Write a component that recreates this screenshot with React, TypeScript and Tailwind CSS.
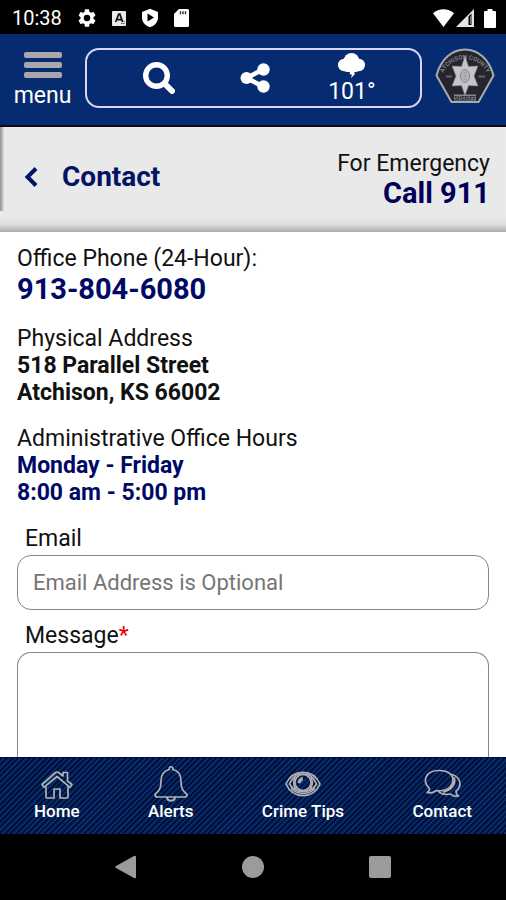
import React from "react";

const ROBOTO = "font-['Roboto','Liberation_Sans',sans-serif]";

function StatusBar() {
  return (
    <div className="flex h-[34px] shrink-0 items-center justify-between bg-black pl-3 pr-2.5 pt-0.5 text-white">
      <div className="flex items-center gap-4">
        <span className="text-[20px] leading-6">10:38</span>
        <svg className="size-[18px]" viewBox="2 2 20 20" fill="#fff" aria-hidden="true">
          <path d="M19.14 12.94c.04-.3.06-.61.06-.94 0-.32-.02-.64-.07-.94l2.03-1.58a.49.49 0 0 0 .12-.61l-1.92-3.32a.49.49 0 0 0-.59-.22l-2.39.96a7 7 0 0 0-1.62-.94l-.36-2.54a.48.48 0 0 0-.48-.41h-3.84a.47.47 0 0 0-.47.41l-.36 2.54c-.59.24-1.13.57-1.62.94l-2.39-.96a.48.48 0 0 0-.59.22L2.74 8.87a.48.48 0 0 0 .12.61l2.03 1.58c-.05.3-.09.63-.09.94s.02.64.07.94l-2.03 1.58a.49.49 0 0 0-.12.61l1.92 3.32c.12.22.37.29.59.22l2.39-.96c.5.38 1.03.7 1.62.94l.36 2.54c.05.24.24.41.48.41h3.84c.24 0 .44-.17.47-.41l.36-2.54a6.8 6.8 0 0 0 1.62-.94l2.39.96c.22.08.47 0 .59-.22l1.92-3.32a.48.48 0 0 0-.12-.61zM12 15.6a3.6 3.6 0 1 1 0-7.2 3.6 3.6 0 0 1 0 7.2z" />
        </svg>
        <svg className="h-[17px] w-3.5" viewBox="0 0 14 17" aria-hidden="true">
          <rect y="1" width="14" height="15" rx="1" fill="#e9e9e9" />
          <path d="M3.6 12 6.700 4.200h1.200L10.600 12M4.800 9.600h4.600" fill="none" stroke="#111" strokeWidth="1.700" />
          <path d="M9 13.500h4M11.500 11.500h1.500" stroke="#777" />
        </svg>
        <svg className="h-5 w-4" viewBox="1 0 16 20" aria-hidden="true">
          <path d="M9 .8 17 4v5.600c0 4.600-3.200 8.200-8 9.700C4.200 17.800 1 14.200 1 9.600V4z" fill="#fff" />
          <path d="M6.500 5.400v8.200L13 9.500z" fill="#000" />
        </svg>
        <svg className="h-[18px] w-[15px]" viewBox="0 0 15 18" aria-hidden="true">
          <path d="M5 0h8.500A1.500 1.500 0 0 1 15 1.500v15a1.500 1.500 0 0 1-1.500 1.500h-12A1.500 1.500 0 0 1 0 16.500V5z" fill="#fff" />
          <path d="M6.500 2.200v3M9 2.200v3M11.500 2.200v3" stroke="#333" strokeWidth="1.400" />
        </svg>
      </div>
      <div className="flex items-center gap-0.5">
        <svg className="h-[18px] w-[21px]" viewBox="0 0 21 18" fill="#fff" aria-hidden="true">
          <path d="M0 4.200C6-1.200 15-1.200 21 4.200L10.500 18z" />
        </svg>
        <svg className="mr-2 size-[18px]" viewBox="0 0 18 18" aria-hidden="true">
          <path d="M0 18 18 0v18z" fill="#e4e4e4" />
          <path d="M12.500 7.500v8.500h3V4.500z" fill="#000" />
          <path d="M14.500 7v8" stroke="#777" />
        </svg>
        <svg className="h-[19px] w-3" viewBox="0 0 12 19" fill="#fff" aria-hidden="true">
          <path d="M3.500 0h5v2H11a1 1 0 0 1 1 1v15a1 1 0 0 1-1 1H1a1 1 0 0 1-1-1V3a1 1 0 0 1 1-1h2.500z" />
        </svg>
      </div>
    </div>
  );
}

function SheriffBadge() {
  return (
    <svg className="h-14 w-[60px] shrink-0" viewBox="0 0 60 56" role="img" aria-label="Atchison County Sheriff">
      <defs>
        <path id="badge-arc" d="M8 25.500A24 24 0 0 1 52 25.500" />
      </defs>
      <path
        d="M1.500 27.500C6 11 17 1.500 30 1.500S54 11 58.500 27.500L43.500 54h-27z"
        fill="#25262d"
        stroke="#a9abb2"
        strokeWidth="2"
        strokeLinejoin="round"
      />
      <text fontSize="6" fill="#8b8c94" fontWeight="500">
        <textPath href="#badge-arc" startOffset="50%" textAnchor="middle">
          ATCHISON COUNTY
        </textPath>
      </text>
      <path
        d="M30 8 33.500 18.500l9.500-.5-4 10 4 10-9.500-.5-3.500 10-3.500-10-9.500.5 4-10-4-10 9.500.5z"
        fill="#c3c5c9"
        stroke="#85878d"
        strokeWidth="0.600"
      />
      <ellipse cx="30" cy="28" rx="4.500" ry="6.500" fill="#b3b5ba" stroke="#85878d" />
      <path d="M28.500 25h3M28.500 28h3M28.500 31h3" stroke="#8b8d93" strokeWidth="0.800" />
      <path d="M11 28.500h6M43.500 28.500h6.500" stroke="#62646c" strokeWidth="2" />
      <rect x="19" y="46.500" width="22" height="6" fill="#85878e" />
      <text x="30" y="51.600" fontSize="5.500" fontWeight="700" textAnchor="middle" fill="#1c1d22">
        SHERIFF
      </text>
    </svg>
  );
}

function Header() {
  return (
    <header className="flex h-[93px] shrink-0 items-start border-b-2 border-[#0c0a12] bg-[#072b70] pl-3.5 pr-[11px] pt-3.5 text-white">
      <button type="button" className="mt-1 flex w-[57px] shrink-0 flex-col items-center">
        <span className="flex w-[38px] flex-col gap-1">
          <span className="h-1.5 rounded-xs bg-[#a9a7ab]" />
          <span className="h-1.5 rounded-xs bg-[#a9a7ab]" />
          <span className="h-1.5 rounded-xs bg-[#a9a7ab]" />
        </span>
        <span className="mt-1 text-[23px] leading-7">menu</span>
      </button>
      <div className="ml-3.5 mr-[13px] grid h-[60px] min-w-0 flex-1 grid-cols-3 items-center rounded-[14px] border-2 border-[#d9d5f2] pl-6 pr-5">
        <button type="button" aria-label="Search" className="flex justify-center">
          <svg className="size-8" viewBox="0 0 32 32" fill="none" stroke="#fff" aria-hidden="true">
            <circle cx="13.500" cy="13.500" r="10.800" strokeWidth="5.400" />
            <path d="m21.500 21.500 7.500 7.500" strokeWidth="6" strokeLinecap="round" />
          </svg>
        </button>
        <button type="button" aria-label="Share" className="flex justify-center">
          <svg className="size-[30px]" viewBox="0 0 30 30" fill="#fff" aria-hidden="true">
            <path d="M24 6 6.500 15 24 24" fill="none" stroke="#fff" strokeWidth="4.500" />
            <circle cx="6.500" cy="15" r="6" />
            <circle cx="23.500" cy="6.500" r="6.200" />
            <circle cx="23.500" cy="23.500" r="6.200" />
          </svg>
        </button>
        <button type="button" className="flex flex-col items-center pt-0.5">
          <svg className="h-[25px] w-[27px]" viewBox="0 0 27 25" fill="#fff" aria-hidden="true">
            <circle cx="13.500" cy="7.800" r="7.800" />
            <circle cx="6.200" cy="12" r="6.200" />
            <circle cx="20.800" cy="12" r="6.200" />
            <rect x="6" y="8" width="15" height="11" rx="3" />
            <path d="M11.500 17h6l-1.500 3.500h1.500L13 25l1-3.500h-2z" />
          </svg>
          <span className="text-[23px] leading-7">101°</span>
        </button>
      </div>
      <SheriffBadge />
    </header>
  );
}

function TitleBar() {
  return (
    <div className="flex h-[105px] shrink-0 items-start justify-between bg-linear-to-b from-[#e9e9e9] from-85% via-[#dcdcdc] via-93% to-[#acacac] pr-4 text-[#000058]">
      <div className="flex">
        <div className="h-[84px] w-1 bg-linear-to-r from-[#8f8f8f] to-[#e0e0e0]" />
        <button type="button" className="mt-9 flex h-7 items-center gap-6 pl-5 text-[#041464]">
          <svg className="h-5 w-3.5" viewBox="0 0 14 20" fill="none" stroke="currentColor" strokeWidth="4" aria-hidden="true">
            <path d="M12 1.500 3.500 10l8.500 8.500" />
          </svg>
          <span className="text-[28px] font-bold leading-7">Contact</span>
        </button>
      </div>
      <div className="pt-[23px] text-right">
        <p className="text-[23px] leading-[27px] text-[#111]">For Emergency</p>
        <a href="tel:911" className="block text-[29px] font-bold leading-[33px]">
          Call 911
        </a>
      </div>
    </div>
  );
}

function ContactDetails() {
  return (
    <main className="flex min-h-0 flex-1 flex-col overflow-hidden bg-white px-[17px] pt-[13px] text-[23px] leading-[27px] text-[#111]">
      <section>
        <p>Office Phone (24-Hour):</p>
        <a href="tel:9138046080" className="block text-[29px] font-bold leading-[34px] text-[#000a66]">
          913-804-6080
        </a>
      </section>
      <section className="mt-[19px]">
        <p>Physical Address</p>
        <p className="font-bold">518 Parallel Street</p>
        <p className="font-bold">Atchison, KS 66002</p>
      </section>
      <section className="mt-[19px]">
        <p>Administrative Office Hours</p>
        <p className="font-bold text-[#000a66]">Monday - Friday</p>
        <p className="font-bold text-[#000a66]">8:00 am - 5:00 pm</p>
      </section>
      <form className="mt-[19px] flex min-h-0 flex-1 flex-col">
        <label htmlFor="email" className="pl-2">
          Email
        </label>
        <input
          id="email"
          type="email"
          placeholder="Email Address is Optional"
          className="mt-[3px] h-[55px] w-full shrink-0 rounded-[14px] border border-[#858585] px-[15px] text-[22px] placeholder:text-[#757575]"
        />
        <label htmlFor="message" className="mt-3 pl-2">
          Message<span className="text-[#e80000]">*</span>
        </label>
        <textarea
          id="message"
          className="mt-[3px] min-h-0 w-full flex-1 resize-none rounded-t-[14px] border border-b-0 border-[#858585] px-[15px] py-3 text-[22px]"
        />
      </form>
    </main>
  );
}

function HomeIcon() {
  return (
    <svg className="h-8 w-8" viewBox="0 0 32 32" fill="none" stroke="#b3b0b3" strokeWidth="1.700" strokeLinejoin="round" aria-hidden="true">
      <path d="M1 16.500 14.500 4.500q1.500-1 3 0L22 8V4.500h4.500v8.500l4.500 3.500-2 2.800L16 8.500 3 19.300z" />
      <path d="M5 18.500V29q0 1 1 1h7v-9h6v9h7q1 0 1-1V18.500" />
    </svg>
  );
}

function BellIcon() {
  return (
    <svg className="h-9 w-[34px]" viewBox="0 0 34 36" fill="none" stroke="#b3b0b3" strokeWidth="1.700" strokeLinejoin="round" aria-hidden="true">
      <path d="M15.300 3.500a1.900 1.900 0 1 1 3.400 0C25 5 27 10 27 15c0 8 2 10 6 13.500 0 2-1 2.500-2.500 2.500h-27C2 31 1 30.500 1 28.500 5 25 7 23 7 15 7 10 9 5 15.300 3.500z" />
      <path d="M13 31c0 5 8 5 8 0" strokeWidth="2" />
    </svg>
  );
}

function EyeIcon() {
  return (
    <svg className="h-7 w-9" viewBox="0 0 36 28" fill="none" stroke="#b3b0b3" strokeWidth="1.700" aria-hidden="true">
      <path d="M1 14C8-1.500 28-1.500 35 14 28 29.500 8 29.500 1 14z" />
      <path d="M4.500 14C9 4.500 13 4 18 4s9 .5 13.500 10C26 24 10 24 4.500 14z" />
      <circle cx="18" cy="12.500" r="8" />
      <path d="M10 7c-2 5-2 9 1.500 13M26 7c2 5 2 9-1.500 13" />
      <path d="M13 13a5 5 0 0 1 4.500-5.500v3a2.500 2.500 0 0 0-2 2.500z" fill="#b3b0b3" strokeWidth="0.600" />
      <path d="M6 18.500c6 6.500 18 6.500 24 0" />
    </svg>
  );
}

function ChatIcon() {
  return (
    <svg className="h-8 w-[38px]" viewBox="0 0 38 32" fill="none" stroke="#b3b0b3" strokeWidth="1.700" strokeLinejoin="round" aria-hidden="true">
      <path d="M6.500 20.500C-1.500 13 3 2.500 15.500 2.500S32 9 29 16c-2.500 5.500-9 7.500-15.500 6.500-3 2-6 3-9.500 2 2-1 2.500-2.500 2.500-4z" />
      <path d="M29 6.500c8 2.500 11 11 4 16.500 0 2.500 1 4 2.500 5-4 1-6.500-.5-8-2-5 1-10 0-12.500-3.200" />
      <path d="M31 9.500c2 7-3 12.500-11 14.500" strokeWidth="2.200" />
    </svg>
  );
}

const TABS = [
  { label: "Home", Icon: HomeIcon },
  { label: "Alerts", Icon: BellIcon },
  { label: "Crime Tips", Icon: EyeIcon },
  { label: "Contact", Icon: ChatIcon },
];

function TabBar() {
  return (
    <nav className="flex h-[77px] shrink-0 justify-between border-t border-[#000a3c] bg-[repeating-linear-gradient(135deg,#00103c_0px,#00103c_2px,#062b66_2px,#062b66_4px)] px-[34px] pt-2">
      {TABS.map(({ label, Icon }) => (
        <a key={label} href="#" className="flex flex-col items-center text-white">
          <span className="flex h-9 items-center">
            <Icon />
          </span>
          <span className="text-[17px] font-medium leading-[18px]">{label}</span>
        </a>
      ))}
    </nav>
  );
}

function SystemNav() {
  return (
    <div className="flex h-[66px] shrink-0 items-center justify-center gap-[105px] bg-black">
      <button type="button" aria-label="Back">
        <svg className="h-6 w-[22px]" viewBox="0 0 22 24" fill="#9b9b9b" aria-hidden="true">
          <path d="M1 11 19 1q2-1 2 1v20q0 2-2 1L1 13q-1.500-1 0-2z" />
        </svg>
      </button>
      <button type="button" aria-label="Home screen" className="size-[22px] rounded-full bg-[#9b9b9b]" />
      <button type="button" aria-label="Recent apps" className="size-[22px] rounded-xs bg-[#9b9b9b]" />
    </div>
  );
}

export default function App() {
  return (
    <div className={`flex h-screen flex-col overflow-hidden ${ROBOTO}`}>
      <StatusBar />
      <Header />
      <TitleBar />
      <ContactDetails />
      <TabBar />
      <SystemNav />
    </div>
  );
}
